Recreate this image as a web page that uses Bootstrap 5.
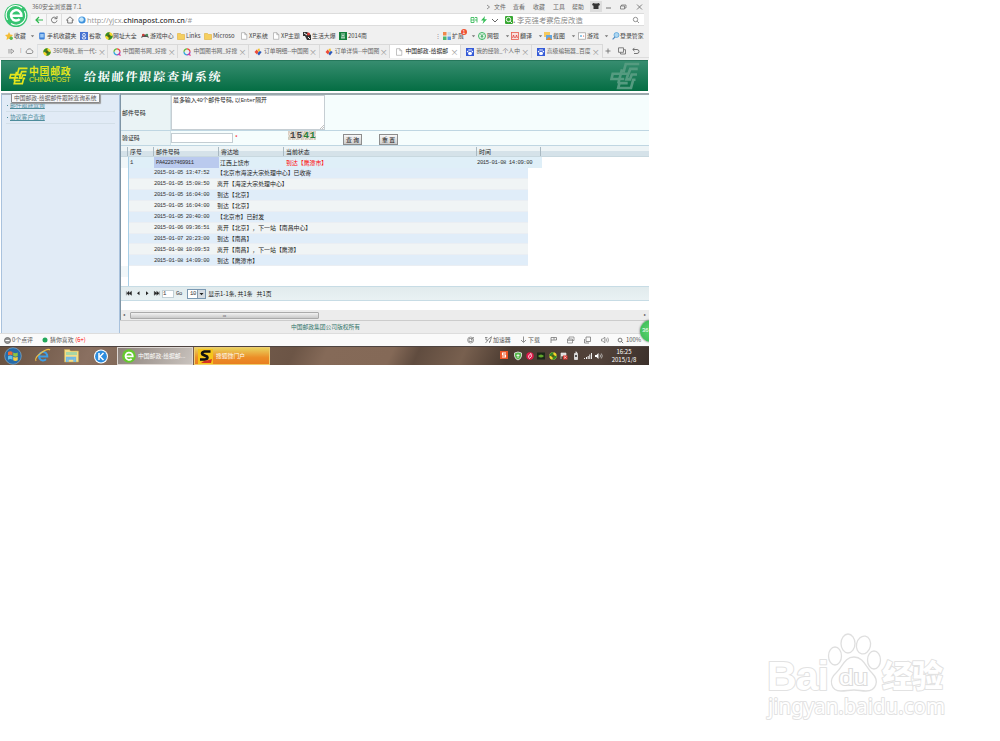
<!DOCTYPE html>
<html lang="zh-CN">
<head>
<meta charset="utf-8">
<meta name="viewport" content="width=device-width, initial-scale=1">
<title>中国邮政-给据邮件跟踪查询系统</title>
<link href="https://cdn.jsdelivr.net/npm/bootstrap@5.3.0/dist/css/bootstrap.min.css" rel="stylesheet">
<style>
body{font:5.9px/1.2 "Liberation Sans","Noto Sans CJK SC",sans-serif;color:#444;background:#fff;height:741px;overflow:hidden;white-space:nowrap}
svg{display:block;flex:none;overflow:visible}
.screen{width:649px;height:365px;overflow:hidden;position:relative}
.chrome-top{height:60px;background:#f0f0f0;display:grid;grid-template-rows:13px 14px 17px 14px 2px}
.g{display:grid;align-items:center;justify-content:start}
.g>*{min-width:0}
.titlebar{grid-template-columns:32px 455px 7px 19px 20px 20px 19px 18px 15px 15px 15px 12px;font-family:"Noto Sans CJK SC",sans-serif;color:#666}
.titlebar .ttl{font-size:6px}
.shirt{background:#ddd;height:11px;width:12px}
.addr{display:grid;grid-template-columns:31px 16px 15px 15px 394px 10px 10px 14px 139px;align-items:stretch}
.addr>*{display:flex;align-items:center}
.addr .cell,.addr .fld,.addr .srch{border:solid #ddd;border-width:1px 0 1px 0;background:#f7f7f7;height:13px}
.addr .cell{border-right-width:1px;justify-content:center}
.addr .fld,.addr .srch{background:#fff}
.url{font:7.3px "Noto Sans",sans-serif;color:#999;margin-left:1px}.url b{font-weight:500;color:#333}
.srch{font:7.3px "Noto Sans CJK SC";color:#888}
.logo360{position:absolute;left:4px;top:3px}
.marks{grid-template-columns:5px 9px 16px 8px 9px 33px 9px 16px 8px 28px 9px 27px 9px 18px 9px 27px 9px 23px 9px 22px 9px 27px 9px 87px 8px 9px 19px 7px 9px 18px 6px 9px 18px 6px 9px 18px 7px 9px 17px 8px 8px 27px}
.marks{font-family:"Noto Sans CJK SC",sans-serif}
.tabs{grid-template-columns:9px 11px 5px 12px repeat(8,70.7px) 13px 14px 14px;border-bottom:1px solid #ddd}
.tb{height:14px;border:1px solid #d9d9d9;border-width:1px 1px 0 0;display:grid;grid-template-columns:5px 10px 44px 1px 8px;align-items:center;font-family:"Noto Sans CJK SC",sans-serif;font-size:5.800px;color:#666;background:#eee}
.tb.on{background:#fff;color:#222}
.tb .cl{color:#999;font-size:8px}
.banner{height:31px;margin:0 1px;background:linear-gradient(#378d70,#046d43);display:grid;grid-template-columns:8px 20px 55px 526px 30px;align-items:center;border-top:1px solid #24775a}
.bn{color:#e5e61b;line-height:1;font-family:"Noto Sans CJK SC",sans-serif;font-weight:700;padding-bottom:1px}
.bn .a{font-size:9.8px;letter-spacing:.8px;line-height:9px}.bn .b{font:7.4px/8px "Liberation Sans";letter-spacing:-.35px}
.sysname{font:700 12px "Liberation Serif","Noto Serif CJK SC","Noto Sans CJK SC",serif;color:#fff;letter-spacing:1.85px}
.sysname span{display:inline-block;transform:skewX(-4deg)}
.work{display:grid;grid-template-columns:120px 529px;height:242px;padding-top:2px;background:#fff}
.side{border:1px solid #a9c2dd;border-top:2px solid #a8b3bd;border-bottom:0;margin-left:1px;background:#e1ebf6;height:240px}
.side .lk{height:12px;margin:0 4px;border-bottom:1px solid #d3dfe8;color:#4d8c9b;padding-left:1px;font-family:"Noto Sans CJK SC";display:flex;align-items:center;font-size:5.8px}
.side .lk:first-child{margin-top:5px}
.side .lk::before{content:"";width:1px;height:1px;background:#4d8c9b;margin-right:2px;flex:none}
.side u{text-decoration-thickness:.5px;text-underline-offset:1px}
.main{border-left:1px solid #7f95a5;height:240px;display:grid;grid-template-rows:36px 15px 140px 15px 9px 10px 13px;border-top:2px solid #9ba9ad}
.frm{display:grid;grid-template-columns:50px 478px;border-bottom:1px solid #bfd6e2;font-family:"Noto Sans CJK SC";color:#222}
.frm>*{display:flex;align-items:center}.frm .lb{background:#eaf3f5;border-right:1px solid #d3e2e7;padding-left:1px}.frm .vl{background:#f5fdfd}
.ta{width:154px;height:35px;border:1px solid #c6ced3;background:#fff;padding:0 1px;align-self:start;position:relative}
.mono{font:5.6px "Liberation Mono",monospace;letter-spacing:-.46px;color:#333}
.vl2{display:grid!important;grid-template-columns:64px 53px 55px 36px 18px}
.inp{width:62px;height:10px;border:1px solid #c3cdd2;background:#fff}
.cap{font:700 9.5px/9px "Liberation Mono";width:28px;height:9px;background:repeating-linear-gradient(115deg,#ddd0c4 0 2px,#ede0da 2px 3px,#c8cdbd 3px 4px);letter-spacing:.9px;padding-left:2px;align-self:start}
.bt{width:19px;height:11px;border:1px solid #8d8d8d;background:linear-gradient(#f7f7f7,#ccc);font-size:5.8px;line-height:9px;text-align:center;color:#111;margin-top:2px}
.dg{display:grid;grid-template-rows:11px 11px repeat(9,10.93px) 1fr;background:linear-gradient(#a9cfe6,#a9cfe6) 7px 0/1px 100% no-repeat #fff;color:#222;overflow:hidden;font-family:"Noto Sans CJK SC"}
.hd{grid-template-columns:7px 26px 65px 65px 193px 64px;background:linear-gradient(#edf4f6 0 45%,#d5e2e9 55%);border-bottom:1px solid #c8d8df;height:11px}
.hd>*{border-right:1px solid #a9b9c2;height:9px;padding-left:2px;line-height:9px}
.r1{grid-template-columns:8px 25px 65px 66px 191px 66px;background:#dfeff8;width:421px}
.r1>*{height:100%;display:flex;align-items:center;padding-left:1px}
.r1 .se{background:#bacaee;padding-left:2px}.r1 .w{background:#f1f7f9;border-right:1px solid #a9cfe6}
.red{color:#f00!important}
.sr{margin-left:8px;width:399px;grid-template-columns:25px 63px 1fr;background:#e0edf9;border-bottom:1px solid #eaeef3}
.sr.al{background:#f0f4f5}
.gutter{width:7px;background:#f1f7f9;height:11px}
.pager{background:linear-gradient(#e1ebed,#e9f1f3);border:solid #c7dce5;border-width:1px 0;grid-template-columns:5px 10px 9px 9px 8px 14px 11px 20px 120px;font-family:"Noto Sans CJK SC";color:#222}
.pi{background:#fff;border:1px solid #c3d0d6;width:12px;height:8px;line-height:6px}
.sel{border:1px solid #7b98b2;background:#fff;width:19px;height:10px;display:flex;justify-content:space-between;align-items:center;padding-left:2px}
.sel svg{background:#d5dbe1;border-left:1px solid #89a}
.sb{display:grid;grid-template-columns:9px 189px 1fr 7px;background:#ececec;align-items:center;font-size:4px}
.sb>span{padding-left:2px}
.th{height:7px;border:1px solid #aaa;border-radius:1px;background:linear-gradient(#f2f2f2,#c9c9c9);text-align:center;line-height:5px}
.ft{background:#ececec;border-top:1px solid #ccc;padding-left:171px;color:#2f7368;display:flex;align-items:center;font-family:"Noto Sans CJK SC";margin-left:-1px;font-size:5.750px}
.status{height:13px;background:#fafafa;border-top:1px solid #ddd;grid-template-columns:4px 8px 29px 9px 24px 393px 18px 8px 28px 7px 22px 17px 17px 17px 16px 9px 22px;font-family:"Noto Sans CJK SC";color:#555}
.task{height:19px;background:linear-gradient(115deg,#66503f,#8a7061 14%,#7a6250 25%,#6c5546 45%,#856a58 50%,#846957 60%,#604c3f 64%,#78604f 71%,#4b3b31 78%,#51423a 92%,#3c302b);border-top:1px solid #4d4340;grid-template-columns:4px 31px 29px 29px 24px 77px 76px 230px 14px 12px 11px 12px 11px 12px 12px 11px 14px 30px;color:#fff;font-family:"Noto Sans CJK SC"}
.app{height:18px;border:1px solid #ded7d2;background:linear-gradient(120deg,#8b8079,#c9c3be);width:76px;display:flex;align-items:center;gap:2px;padding-left:4px;font-size:5.8px}
.app.or{background:linear-gradient(#e9d15c,#ec8d27 60%,#e97f20);border-color:#efcd6f;padding-left:3px;gap:3px}
.clk{text-align:center;font-size:6px;line-height:8px;width:30px}
.tip{position:absolute;left:11px;top:93px;width:89px;height:10px;border:1px solid #888;border-radius:1px;background:#f7f7f9;box-shadow:1px 1px 1px #999;padding-left:2px;line-height:8px;font-size:5.75px;font-family:"Noto Sans CJK SC";color:#555}
.ball{position:absolute;left:640px;top:320px;width:22px;height:22px;border-radius:50%;background:radial-gradient(#5fd873,#36b550);box-shadow:0 0 2px #555;color:#fff;font-size:6px;line-height:21px;padding-left:2px}
.bdg{position:absolute;left:461px;top:29px;width:6px;height:6px;border-radius:50%;background:#ef5030;color:#fff;font-size:5px;line-height:6px;text-align:center}
.wm{position:absolute;left:750px;top:620px}
</style>
</head>
<body>
<svg width="0" height="0" class="position-absolute"><defs>
<symbol id="fold" viewBox="0 0 8 8"><path d="M.5 1.500h3l1 1h3v5h-7z" fill="#f5cf60" stroke="#dfae3a" stroke-width=".6"/></symbol>
<symbol id="page" viewBox="0 0 8 8"><path d="M1.500.7h3.300l2 2v4.600H1.500zM4.800.7v2h2" fill="#fff" stroke="#999" stroke-width=".6"/></symbol>
<symbol id="nav" viewBox="0 0 8 8"><circle cx="4" cy="4" r="3.700" fill="#f5d92b"/><path d="M.3 4.500A3.700 3.700 0 0 1 5 .5L3 3.500zM7.700 3.500A3.700 3.700 0 0 1 3 7.500L5 4.500z" fill="#2f8b2e"/><path d="M4 2.200v3.600M2.200 4h3.600" stroke="#173d12"/></symbol>
<symbol id="book" viewBox="0 0 8 8"><g fill="none" stroke-width="1.300"><path d="M4 .8a3 3 0 0 1 3 3" stroke="#ef4a3b"/><path d="M7 3.800a3 3 0 0 1-3 3" stroke="#9d45c2"/><path d="M4 6.800a3 3 0 0 1-3-3" stroke="#2da8dc"/><path d="M1 3.800a3 3 0 0 1 3-3" stroke="#65b93b"/><path d="M6 6l1.500 1.600" stroke="#e8408a"/></g></symbol>
<symbol id="ord" viewBox="0 0 8 8"><path d="M.5 4l2.300-2.500L4.500 4 3 6.500z" fill="#ef4b37"/><path d="M3.500 1l2-.5L6 3 4.500 4z" fill="#f2c12e"/><path d="M4.500 4L6 3l1.700 1L5 7.500 3.500 6z" fill="#2b59bb"/></symbol>
<symbol id="bd" viewBox="0 0 8 8"><rect width="8" height="8" fill="#355bd8"/><g fill="#fff"><ellipse cx="4" cy="5.400" rx="2" ry="1.700"/><circle cx="1.600" cy="3.600" r=".8"/><circle cx="3.100" cy="2" r=".8"/><circle cx="5" cy="2" r=".8"/><circle cx="6.400" cy="3.600" r=".8"/></g></symbol>
<symbol id="mag" viewBox="0 0 8 8"><circle cx="3.500" cy="3.500" r="2.200" fill="none" stroke="currentColor" stroke-width=".9"/><path d="M5.200 5.200L7 7" stroke="currentColor" stroke-width=".9"/></symbol>
<symbol id="car" viewBox="0 0 6 4"><path d="M1 1h4L3 3.400z" fill="#777"/></symbol>
<symbol id="e" viewBox="0 0 24 24"><path d="M6.500 12.800h12a6.300 6.300 0 1 0-2 4.200" fill="none" stroke="currentColor" stroke-width="3"/></symbol>
<symbol id="post" viewBox="0 0 20 18"><path d="M19.500 1H10.500L9 6.500M18.500 4.300h-5L12.300 7.500H1.800L1 11h8.500M18 8h-3.500L13.300 11.300H11L12 8M17 11.500h-1.500L14 17H5.500L6.300 13.800h5.500M8 4.500L5.500 14" fill="none" stroke="currentColor" stroke-width="1.800"/></symbol>
</defs></svg>

<div class="screen">
 <header class="chrome-top">
  <div class="g titlebar"><i></i><span class="ttl">360安全浏览器 7.1</span><svg width="6" height="8"><path d="M0 2l2.500 2L0 6" fill="none" stroke="#777" stroke-width=".8"/></svg><span>文件</span><span>查看</span><span>收藏</span><span>工具</span><span>帮助</span>
   <span class="shirt"><svg width="12" height="10" viewBox="0 0 12 10"><path d="M3 2l2 .5h2L9 2l1 2-1.500.7V8h-5V4.700L2 4z" fill="#333"/></svg></span>
   <svg width="8" height="8"><path d="M1 5h5" stroke="#555" stroke-width=".8"/></svg>
   <svg width="8" height="8"><path d="M.5 3h4v3h-4zM1.500 3V2h4.500v3H4.500" fill="none" stroke="#666" stroke-width=".7"/></svg>
   <svg width="8" height="8"><path d="M2 1.500l5 5M7 1.500L2 6.500" stroke="#666" stroke-width=".8"/></svg></div>
  <div class="addr"><i></i>
   <span class="cell"><svg width="8" height="8"><path d="M8 4H1M4 1L1 4l3 3" fill="none" stroke="#2fb84f" stroke-width="1.200"/></svg></span>
   <span class="cell"><svg width="8" height="8"><path d="M6.500 2.300A2.800 2.800 0 1 0 7 4.500M7 0v2.700H4.500" fill="none" stroke="#666" stroke-width=".9"/></svg></span>
   <span class="cell border-end-0"><svg width="8" height="8"><path d="M.5 4L4 .8 7.500 4H6.300v3H1.700V4z" fill="none" stroke="#666" stroke-width=".9"/></svg></span>
   <span class="fld"><svg width="9" height="8"><circle cx="5" cy="4" r="3.600" fill="#3c91dc"/><circle cx="4.500" cy="3.500" r="2.300" fill="#c5e6fa"/></svg><span class="url">http://yjcx.<b>chinapost.com.cn</b>/#</span></span>
   <span class="fld"><svg width="7" height="8"><path d="M0 1.500h3v5H0zM0 4h3M4 1.500h2v5M4 4h2" fill="none" stroke="#3dbb5d" stroke-width=".9"/></svg></span>
   <span class="fld"><svg width="7" height="8"><path d="M4 0L0 4.500h2.600L1.500 8 6 3.300H3.400z" fill="#35bd57"/></svg></span>
   <span class="fld"><svg width="8" height="8"><path d="M1 3l3 3 3-3" fill="none" stroke="#666"/></svg></span>
   <span class="srch"><svg width="8" height="8" class="text-white"><rect width="8" height="8" rx="1" fill="#38a832"/><use href="#mag" width="8" height="8"/></svg><b>.</b><span class="flex-fill">&nbsp;李克强考察危房改造</span><svg width="8" height="8" class="me-1"><use href="#mag" width="8" height="8"/></svg></span>
  </div>
  <div class="g marks"><i></i>
   <svg width="8" height="8"><path d="M4 0l1.200 2.600L8 3 6 5l.5 3L4 6.600 1.500 8 2 5 0 3l2.800-.4z" fill="#f4bc34"/><circle cx="6.200" cy="6.200" r="1.700" fill="#5db950"/></svg><span>收藏</span><svg width="5" height="4"><use href="#car"/></svg>
   <svg width="8" height="8"><rect x="1.200" y=".5" width="5.500" height="7" rx="1" fill="#3c80d8"/><path d="M2.200 2h3.500v3.500H2.200z" fill="#9cc8f4"/></svg><span>手机收藏夹</span>
   <svg width="8" height="8"><rect width="8" height="8" fill="#4773d1"/><circle cx="4" cy="2.800" r="1.400" fill="none" stroke="#fff" stroke-width=".8"/><ellipse cx="4" cy="5.900" rx="1.800" ry="1.200" fill="none" stroke="#fff" stroke-width=".8"/></svg><span>谷歌</span>
   <svg width="8" height="8"><use href="#nav" width="8" height="8"/></svg><span>网址大全</span>
   <svg width="8" height="8"><path d="M0 6l1.500-3.500h5L8 6 6 5H2z" fill="#555"/><circle cx="2.300" cy="3" r="1.200" fill="#cd3b32"/><circle cx="6" cy="3" r="1.200" fill="#47925b"/></svg><span>游戏中心</span>
   <svg width="8" height="8"><use href="#fold" width="8" height="8"/></svg><span>Links</span><svg width="8" height="8"><use href="#fold" width="8" height="8"/></svg><span>Microso</span>
   <svg width="8" height="8"><use href="#page" width="8" height="8"/></svg><span>XP系统</span><svg width="8" height="8"><use href="#page" width="8" height="8"/></svg><span>XP主题</span>
   <svg width="8" height="8"><path d="M0 0h4l4 3v5H4L2 4H0z" fill="#333"/><path d="M1 1l3 2M5 5l2 2" stroke="#fff"/><circle cx="5.500" cy="2" r="1.500" fill="#d93b36"/></svg><span>生活大爆</span>
   <svg width="8" height="8"><rect width="8" height="8" fill="#15803d"/><path d="M2 2h4M2 6h4M2.500 3.500h3M3 4v2M5 4v2" stroke="#fff" stroke-width=".7"/></svg><span>2014南</span>
   <span class="text-black-50">⋮</span>
   <svg width="8" height="8"><path d="M0 0h3.500v3.500H0z" fill="#f0884c"/><path d="M0 4.500h3.500V8H0z" fill="#4eb870"/><path d="M4.500 4.500H8V8H4.500z" fill="#5a9be0"/><path d="M4.500 0H8v3.500H4.500z" fill="#c8dce8"/></svg><span>扩展</span><svg width="5" height="4"><use href="#car"/></svg>
   <svg width="8" height="8"><circle cx="4" cy="4" r="3.500" fill="#e4f6e9" stroke="#3eb764"/><path d="M2.600 2L4 4l1.400-2M4 4v2.500M2.600 4.600h2.800" stroke="#2a9d4d" stroke-width=".7" fill="none"/></svg><span>网银</span><svg width="5" height="4"><use href="#car"/></svg>
   <svg width="8" height="8"><rect x=".4" y=".4" width="7" height="7" fill="#fae0dd" stroke="#e75c4d" stroke-width=".8"/><path d="M1.500 6l1-3 1 3M4.500 6l1-3 1 3" stroke="#d33" stroke-width=".7" fill="none"/></svg><span>翻译</span><svg width="5" height="4"><use href="#car"/></svg>
   <svg width="8" height="8"><rect width="6" height="5" fill="#f5c95e"/><rect x="2" y="3" width="6" height="5" fill="#64a6df"/><path d="M2 8l3-3 3 3z" fill="#e88f31"/></svg><span>截图</span><svg width="5" height="4"><use href="#car"/></svg>
   <svg width="8" height="8"><rect x=".4" y=".8" width="7" height="6.400" fill="#fff" stroke="#999" stroke-width=".7"/><path d="M2 4h2M3 3v2" stroke="#489dd6" stroke-width=".7"/><circle cx="5.600" cy="4" r=".6" fill="#d43"/></svg><span>游戏</span><svg width="5" height="4"><use href="#car"/></svg>
   <svg width="8" height="8"><circle cx="4.500" cy="3" r="2.500" fill="#aed6f0" stroke="#4a9cd8" stroke-width=".7"/><path d="M3 5L.6 7.400" stroke="#548bc0" stroke-width="1.200"/></svg><span>登录管家</span>
  </div>
  <div class="g tabs"><i></i><svg width="8" height="8"><path d="M0 2v4.500M2 2l3 2.200L2 6.500z" stroke="#777" fill="none" stroke-width=".7"/></svg><span class="text-black-50">|</span><svg width="9" height="8"><path d="M2 6.500a1.700 1.700 0 0 1 0-3A2.500 2.500 0 0 1 6.500 3a1.800 1.800 0 0 1 0 3.500z" fill="none" stroke="#777" stroke-width=".8"/></svg>
   <div class="tb border-start"><i></i><svg width="8" height="8"><use href="#nav" width="8" height="8"/></svg><span>360导航_新一代:</span><i></i><span class="cl">×</span></div>
   <div class="tb"><i></i><svg width="8" height="8"><use href="#book" width="8" height="8"/></svg><span>中国图书网_好搜</span><i></i><span class="cl">×</span></div>
   <div class="tb"><i></i><svg width="8" height="8"><use href="#book" width="8" height="8"/></svg><span>中国图书网_好搜</span><i></i><span class="cl">×</span></div>
   <div class="tb"><i></i><svg width="8" height="8"><use href="#ord" width="8" height="8"/></svg><span>订单明细--中国图</span><i></i><span class="cl">×</span></div>
   <div class="tb"><i></i><svg width="8" height="8"><use href="#ord" width="8" height="8"/></svg><span>订单详情--中国图</span><i></i><span class="cl">×</span></div>
   <div class="tb on"><i></i><svg width="8" height="8"><use href="#page" width="8" height="8"/></svg><span>中国邮政-给据邮</span><i></i><span class="cl">×</span></div>
   <div class="tb"><i></i><svg width="8" height="8"><use href="#bd" width="8" height="8"/></svg><span>我的经验_个人中</span><i></i><span class="cl">×</span></div>
   <div class="tb"><i></i><svg width="8" height="8"><use href="#bd" width="8" height="8"/></svg><span>高级编辑器_百度</span><i></i><span class="cl">×</span></div>
   <svg width="8" height="8"><path d="M2.500 4h5M5 1.500v5" stroke="#666" stroke-width=".8"/></svg>
   <svg width="9" height="8"><path d="M2.500.8h5v4.500h-5zM4.500 5.500V7H9.500V2.700H7.700" fill="none" stroke="#666" stroke-width=".8"/></svg>
   <svg width="9" height="8"><path d="M4.500.8L2.800 2.500l1.700 1.700M3 2.500h4a2 2 0 0 1 0 4H4" fill="none" stroke="#666" stroke-width=".9"/></svg>
  </div><div></div>
 </header>

 <div class="banner"><i></i><svg width="19" height="18" style="color:#e5e61b"><use href="#post" width="19" height="18"/></svg>
  <div class="bn"><div class="a">中国邮政</div><div class="b">CHINA POST</div></div>
  <div class="sysname"><span>给据邮件跟踪查询系统</span></div>
  <svg width="30" height="30" style="color:#559b80"><use href="#post" width="30" height="30"/></svg></div>

 <div class="work">
  <aside class="side"><div class="lk"><u>邮件跟踪查询</u></div><div class="lk"><u>协议客户查询</u></div></aside>
  <main class="main">
   <div class="frm"><div class="lb">邮件号码</div><div class="vl"><div class="ta">最多输入<span class="mono">40</span>个邮件号码, 以<span class="mono">Enter</span>隔开<svg class="position-absolute bottom-0 end-0" width="4" height="4"><path d="M0 4l4-4M2 4l2-2" stroke="#999" stroke-width=".6"/></svg></div></div></div>
   <div class="frm"><div class="lb">验证码</div><div class="vl vl2"><div class="inp"></div><span class="red">*</span><div class="cap"><span style="color:#444">15</span><span style="color:#288039">41</span></div><div class="bt">查 询</div><div class="bt">重 置</div></div></div>
   <div class="dg">
    <div class="g hd" ><span></span><span>序号</span><span>邮件号码</span><span>寄达地</span><span>当前状态</span><span>时间</span></div>
    <div class="g r1"><span class="w"></span><span class="mono">1</span><span class="se mono">PA42267469911</span><span>江西上饶市</span><span class="red">到达【鹰潭市】</span><span class="mono">2015-01-08 14:09:00</span></div>
    <div class="g sr"><i></i><span class="mono">2015-01-05 13:47:52</span><span>【北京市海淀大宗处理中心】已收寄</span></div>
    <div class="g sr al"><i></i><span class="mono">2015-01-05 15:08:50</span><span>离开【海淀大宗处理中心】</span></div>
    <div class="g sr"><i></i><span class="mono">2015-01-05 16:04:00</span><span>到达【北京】</span></div>
    <div class="g sr al"><i></i><span class="mono">2015-01-05 16:04:00</span><span>到达【北京】</span></div>
    <div class="g sr"><i></i><span class="mono">2015-01-05 20:40:00</span><span>【北京市】已封发</span></div>
    <div class="g sr al"><i></i><span class="mono">2015-01-06 09:36:51</span><span>离开【北京】，下一站【南昌中心】</span></div>
    <div class="g sr"><i></i><span class="mono">2015-01-07 20:23:00</span><span>到达【南昌】</span></div>
    <div class="g sr al"><i></i><span class="mono">2015-01-08 10:09:53</span><span>离开【南昌】，下一站【鹰潭】</span></div>
    <div class="g sr"><i></i><span class="mono">2015-01-08 14:09:00</span><span>到达【鹰潭市】</span></div>
    <div class="gutter"></div>
   </div>
   <div class="g pager"><i></i>
    <svg width="6" height="5"><path d="M.4.300v4M3 .300v4L.8 2.300zM5.500.300v4L3 2.300z" fill="#222" stroke="#222" stroke-width=".4"/></svg>
    <svg width="5" height="5"><path d="M3.500.300v4L1 2.300z" fill="#222"/></svg><svg width="5" height="5"><path d="M1 .300v4l2.500-2z" fill="#222"/></svg>
    <svg width="6" height="5"><path d="M.3.300v4l2.400-2zM2.700.300v4l2.400-2zM5.300.300v4" fill="#222" stroke="#222" stroke-width=".4"/></svg>
    <div class="pi mono">1</div><span class="mono">Go</span><div class="sel mono">10<svg width="8" height="8"><path d="M1.500 3h4L3.500 5.300z" fill="#222"/></svg></div><span>&nbsp;显示1-1条, 共1条 &nbsp; 共1页</span></div>
   <div></div>
   <div class="sb"><span>◂</span><div class="th">ııı</div><i></i><span>▸</span></div>
   <div class="ft">中国邮政集团公司版权所有</div>
  </main>
 </div>

 <div class="g status"><i></i><svg width="7" height="7"><circle cx="3.500" cy="3.500" r="3" fill="#999" stroke="#666" stroke-width=".8"/><path d="M1.500 3.500h4" stroke="#fff"/></svg><span>0个点评</span><svg width="6" height="6"><circle cx="4" cy="3" r="2.500" fill="#22a85a"/></svg><span>猜你喜欢</span><span class="red">&nbsp;(6+)</span>
  <svg width="8" height="8"><circle cx="3.600" cy="4" r="3" fill="none" stroke="#777" stroke-width=".7"/><path d="M2 2.500h3v3H2zM4 4l3-3" fill="none" stroke="#777" stroke-width=".7"/></svg>
  <svg width="8" height="8"><path d="M0 1.500h2.500M1 1.500v2.500h1.500L6.500.7 5 6M3 4L.5 7M4.500 5v2" fill="none" stroke="#666" stroke-width=".7"/></svg><span>加速器</span>
  <svg width="7" height="8"><path d="M2.500.5V6M0 4l2.500 2.500L5 4" fill="none" stroke="#777" stroke-width=".8"/></svg><span>下载</span>
  <svg width="8" height="8"><path d="M1 7V1.500h5.500V4H1M4 1.500v2.200" fill="none" stroke="#777" stroke-width=".8"/></svg>
  <svg width="8" height="8"><path d="M.5 3h5v4h-5zM2 3V1h5v3.500H5.500M.5 4.300h5" fill="none" stroke="#777" stroke-width=".7"/></svg>
  <svg width="8" height="8"><path d="M2 1h4.500v4.500H2zM.5 3v4H5" fill="none" stroke="#777" stroke-width=".8"/></svg>
  <svg width="8" height="8"><path d="M.5 3h1.300l2-2v6l-2-2H.5zM5.300 2.500v3M6.700 1.500q1.500 2.500 0 5" fill="none" stroke="#777" stroke-width=".7"/></svg>
  <svg width="7" height="7"><use href="#mag" width="7" height="7"/></svg><span>100%</span></div>

 <div class="g task"><i></i>
  <svg width="18" height="18"><circle cx="9" cy="9" r="8.300" fill="#266ba9" stroke="#8dbad8" stroke-width=".6"/><path d="M4 5q2.200-1.700 4.500 0v3.500q-2.200-1.500-4.500 0z" fill="#ed6b34"/><path d="M9.200 5.500q2.200 1.400 4.500 0V9q-2.200 1.400-4.500 0z" fill="#90c53c"/><path d="M4 9.300q2.200-1.500 4.500 0v3.500q-2.200-1.500-4.500 0z" fill="#60bee9"/><path d="M9.200 9.800q2.200 1.400 4.500 0v3.500q-2.200 1.400-4.500 0z" fill="#f8cd40"/></svg>
  <svg width="16" height="16" style="color:#3e9ee6"><use href="#e" width="16" height="16"/><path d="M1 13Q-1 10 6 5T15 2" fill="none" stroke="#eebf45" stroke-width="1.200"/></svg>
  <svg width="16" height="16"><path d="M.5 1.500h5l1 1.500h8v11H.5z" fill="#f4dd88" stroke="#c7a84d" stroke-width=".6"/><path d="M2 4h11v3H2z" fill="#a8d6a5"/><path d="M2.500 14v-4.500h9V14M4 14v-3h6v3" stroke="#70b9e5" fill="none" stroke-width="1.300"/></svg>
  <svg width="15" height="15"><circle cx="8" cy="7.500" r="7" fill="#fff"/><circle cx="8" cy="7.500" r="5.900" fill="#2c8cde"/><path d="M6 4v7M10.500 4L7 7.500 10.500 11" fill="none" stroke="#fff" stroke-width="1.500"/></svg>
  <div class="app"><svg width="14" height="14"><circle cx="7" cy="7" r="6.800" fill="#65c92e"/><g color="#fff"><use href="#e" width="14" height="14"/></g></svg><span>中国邮政-给据邮...</span></div>
  <div class="app or"><svg width="15" height="15"><rect width="15" height="15" fill="#f5c51b"/><path d="M12.500 2.500H6.500Q3 3.500 4.500 5.500L9 7.500Q10.500 10 7 10.500H2" fill="none" stroke="#111" stroke-width="2.700"/><path d="M3 14q3-3 6-2.500L14 10l-1 4z" fill="#d63022"/></svg><span>搜狐微门户</span></div><i></i>
  <svg width="8" height="10"><rect y="0" width="8" height="8" fill="#ed5627"/><path d="M6 2H2.500v2h3v2H2" fill="none" stroke="#fff" stroke-width="1.100"/></svg>
  <svg width="8" height="8"><path d="M4 0l3.500 1v3Q7 7 4 8 1 7 .5 4V1z" fill="#56b84a" stroke="#eee" stroke-width=".8"/><path d="M4 2v4M2.500 3.500h3" stroke="#fff" stroke-width=".8"/></svg>
  <svg width="8" height="8"><circle cx="4" cy="4" r="3.700" fill="#df1c4b"/><path d="M5 1.500Q1 4 3.500 6.500 6.500 5 5 1.500" fill="none" stroke="#fff" stroke-width=".8"/></svg>
  <svg width="8" height="8"><rect y=".5" width="8" height="7" fill="#1b2818"/><path d="M1 4q3-3 6 0-3 3-6 0" fill="#62a62c"/></svg>
  <svg width="8" height="8"><use href="#nav" width="8" height="8"/></svg>
  <svg width="8" height="8"><path d="M1 7V1h5v3H1" fill="#ddd" stroke="#eee" stroke-width=".6"/><rect x="3" y="3.500" width="4.500" height="4" fill="#d5332d"/><path d="M4 4.500l2.500 2M6.500 4.500L4 6.500" stroke="#fff" stroke-width=".6"/></svg>
  <svg width="8" height="8"><path d="M2.500 1.500h3v6h-3zM3.300 0h1.400v1.500" fill="#ddd" stroke="#fff" stroke-width=".6"/><path d="M3 3h2v2H3z" fill="#555"/></svg>
  <svg width="8" height="8"><path d="M0 7h1V6H0zM2 7h1V5H2zM3.700 7h1V4h-1zM5.300 7h1V2.500h-1zM7 7h1V1H7z" fill="#eee"/></svg>
  <svg width="8" height="8"><path d="M0 3h1.500l2-2v6l-2-2H0z" fill="#fff"/><path d="M5 2.500q1 1.500 0 3M6.300 1.500q2 2.500 0 5" stroke="#ddd" stroke-width=".7" fill="none"/></svg>
  <div class="clk">16:25<br>2015/1/8</div></div>
 <svg class="logo360" width="24" height="24" viewBox="0 0 24 24" color="#fff"><circle cx="12" cy="12.500" r="11.500" fill="#36c370"/><path d="M3.500 17A9.500 9.500 0 0 1 18 5M20.500 8A9.500 9.500 0 0 1 7 20.500" fill="none" stroke="#fff" stroke-width="1.200"/><use href="#e" x="2" y="2" width="20" height="20"/></svg>
 <span class="bdg">1</span>
 <div class="tip">中国邮政-给据邮件跟踪查询系统</div>
 <div class="ball">36</div>
</div>

<svg class="wm" width="220" height="110" viewBox="0 0 220 110">
 <g fill="#fff" stroke="#e2e2e2" stroke-width="2" paint-order="stroke" stroke-linejoin="round">
  <text x="17" y="70" font-family="Liberation Sans" font-weight="700" font-size="41" textLength="62">Bai</text>
  <text x="132" y="67" font-family="Noto Sans CJK SC" font-weight="900" font-size="31" textLength="61">经验</text>
  <text x="18" y="93.500" font-family="Noto Sans" font-size="21.500" textLength="177" lengthAdjust="spacingAndGlyphs">jingyan.baidu.com</text></g>
 <g fill="#fff" stroke="#dfdfdf" stroke-width="1.300"><ellipse cx="85" cy="36" rx="6.500" ry="9"/><ellipse cx="98" cy="23.500" rx="7" ry="9.500"/><ellipse cx="113.500" cy="25" rx="7" ry="9" transform="rotate(12 113.500 25)"/><ellipse cx="124" cy="40" rx="6.500" ry="9"/><path d="M104 37c10 0 12 11 18 16 8 8 4 18-6 18-5 0-7-1-12-1s-8 1-13 1c-10 0-13-11-5-18 7-6 8-16 18-16z"/></g>
 <text x="89" y="65" font-family="Liberation Sans" font-size="22" fill="#fff" stroke="#dcdcdc" stroke-width="2" paint-order="stroke" textLength="29" lengthAdjust="spacingAndGlyphs">du</text>
</svg>
<script src="https://cdn.jsdelivr.net/npm/bootstrap@5.3.0/dist/js/bootstrap.bundle.min.js"></script>
</body>
</html>
